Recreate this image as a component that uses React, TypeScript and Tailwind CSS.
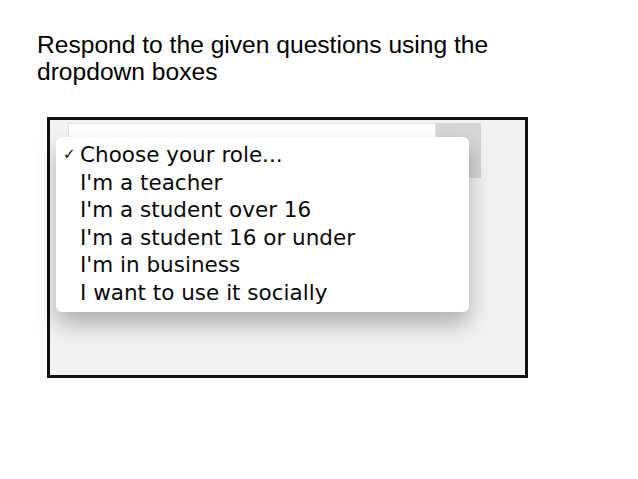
export default function App() {
    const roles = [
        "Choose your role...",
        "I'm a teacher",
        "I'm a student over 16",
        "I'm a student 16 or under",
        "I'm in business",
        "I want to use it socially",
    ];

    return (
        <div className="w-[638px] h-[479px] bg-white overflow-hidden">
            <div className="pl-[37px] pt-[32px] text-[24.6px] leading-[26.5px] text-black font-['Liberation_Sans',Arial,sans-serif]">
                <p>Respond to the given questions using the</p>
                <p>dropdown boxes</p>
            </div>

            <div className="relative ml-[47px] mt-[32px] w-[481px] h-[261px] border-[3px] border-[#111] bg-[#f2f2f2]">
                <div className="flex ml-[18px] mt-[3px] w-[413px] h-[55px]">
                    <div className="flex-1 bg-white border border-[#e2e2e2]" />
                    <div className="w-[45px] bg-[#d6d6d6]" />
                </div>

                <div className="absolute left-[6px] top-[17px] w-[413px] h-[175px] rounded-[6px] bg-white shadow-[0_12px_22px_rgba(0,0,0,0.28)] pt-[4px] font-['DejaVu_Sans',Verdana,sans-serif] text-[21.5px] leading-[27.6px] text-[#0a0a0a]">
                    {roles.map((role, index) => (
                        <div key={index} className="flex items-center">
                            <span className="w-[24px] pl-[7px] text-[15px]">{index === 0 ? "✓" : ""}</span>
                            <span>{role}</span>
                        </div>
                    ))}
                </div>
            </div>
        </div>
    );
}
